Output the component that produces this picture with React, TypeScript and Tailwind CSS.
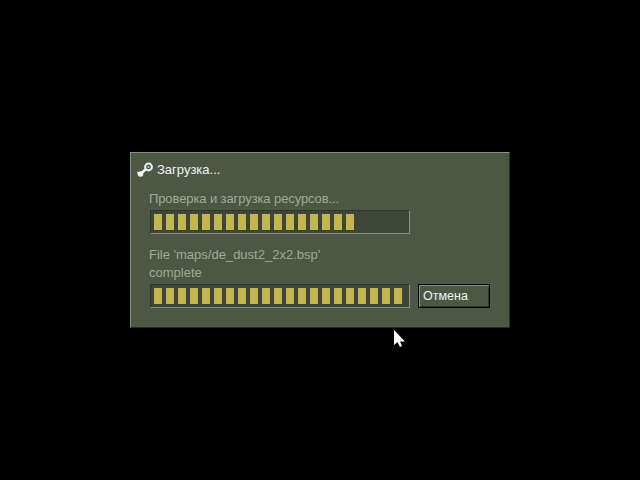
const SEGMENTS_A = Array.from({ length: 17 });
const SEGMENTS_B = Array.from({ length: 21 });

function Bar({ segments }: { segments: unknown[] }) {
  return (
    <div className="ml-px flex h-6 w-[260px] gap-1 border border-t-[#2f3529] border-l-[#2f3529] border-r-[#889180] border-b-[#889180] bg-[#3e4637] pl-[3px] pt-[3px]">
      {segments.map((_, i) => (
        <div key={i} className="h-4 w-2 bg-[#c4b550]" />
      ))}
    </div>
  );
}

export default function App() {
  return (
    <div className="relative flex h-[480px] w-[640px] items-start bg-black pl-[130px] pt-[152px] font-['Liberation_Sans',sans-serif] text-[13px] leading-[18px]">
      <div className="flex h-[176px] w-[380px] flex-col border border-t-[#889180] border-l-[#889180] border-r-[#282e22] border-b-[#282e22] bg-[#4c5844]">
        <div className="ml-[5px] mt-2 flex h-[18px] items-center gap-[4px] text-[#f2f2f2]">
          <svg width="17" height="17" viewBox="0 0 17 17">
            <circle cx="12.5" cy="5" r="3.4" fill="none" stroke="#f2f2f2" strokeWidth="2" />
            <circle cx="12.5" cy="5" r="1" fill="#c8ccc2" />
            <path d="M9.5 7.5 L5.5 11 " stroke="#f2f2f2" strokeWidth="2.4" fill="none" />
            <circle cx="4.5" cy="12" r="2.8" fill="#f2f2f2" />
            <path d="M0.5 9.5 L4 11 L2.5 13 Z" fill="#f2f2f2" />
          </svg>
          <span>Загрузка...</span>
        </div>
        <div className="ml-[18px] mt-[11px] flex flex-col text-[#a0aa95]">
          <div className="h-[19px] tracking-[-0.1px]">Проверка и загрузка ресурсов...</div>
          <div className="mt-[1px]"><Bar segments={SEGMENTS_A} /></div>
          <div className="mt-[12px]">File 'maps/de_dust2_2x2.bsp'</div>
          <div>complete</div>
          <div className="mt-[2px] flex items-start gap-2">
            <Bar segments={SEGMENTS_B} />
            <button className="h-6 w-[72px] border border-black bg-[#4c5844] pl-[4px] text-left text-[12.5px] text-[#f2f2f2] shadow-[inset_1px_1px_0_#889180,inset_-1px_-1px_0_#2f3529]">Отмена</button>
          </div>
        </div>
      </div>
      <svg className="absolute left-[394px] top-[330px]" width="12" height="18" viewBox="0 0 12 18">
        <path d="M0 0 L0 15 L3.5 12 L6 17 L8 16 L6 11.5 L11 11.5 Z" fill="#fff" />
      </svg>
    </div>
  );
}
